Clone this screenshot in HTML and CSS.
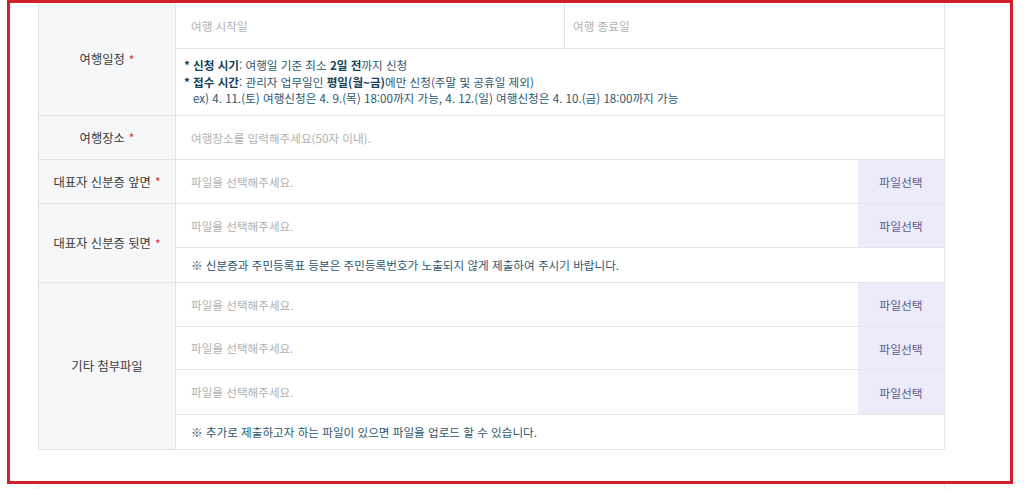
FILE: index.html
```html
<!DOCTYPE html>
<html lang="ko">
<head>
<meta charset="utf-8">
<link rel="stylesheet" href="styles.css">
</head>
<body>
<div class="frame">
  <div class="form">
    <div class="row">
      <div class="label">여행일정 <span class="req">*</span></div>
      <div class="cells">
        <div class="sub h46 split">
          <div class="half ph">여행 시작일</div>
          <div class="half ph divider">여행 종료일</div>
        </div>
        <div class="sub note-block">
          <p><span class="b">* 신청 시기</span>: 여행일 기준 최소 <span class="b">2일 전</span>까지 신청</p>
          <p><span class="b">* 접수 시간</span>: 관리자 업무일인 <span class="b">평일(월~금)</span>에만 신청(주말 및 공휴일 제외)</p>
          <p class="indent">ex) 4. 11.(토) 여행신청은 4. 9.(목) 18:00까지 가능, 4. 12.(일) 여행신청은 4. 10.(금) 18:00까지 가능</p>
        </div>
      </div>
    </div>
    <div class="row">
      <div class="label">여행장소 <span class="req">*</span></div>
      <div class="cells">
        <div class="sub h43 ph pad">여행장소를 입력해주세요(50자 이내).</div>
      </div>
    </div>
    <div class="row">
      <div class="label">대표자 신분증 앞면 <span class="req">*</span></div>
      <div class="cells">
        <div class="sub h43 file"><span class="ph pad">파일을 선택해주세요.</span><span class="btn">파일선택</span></div>
      </div>
    </div>
    <div class="row">
      <div class="label">대표자 신분증 뒷면 <span class="req">*</span></div>
      <div class="cells">
        <div class="sub h44 file"><span class="ph pad">파일을 선택해주세요.</span><span class="btn">파일선택</span></div>
        <div class="sub h34 info pad">※ 신분증과 주민등록표 등본은 주민등록번호가 노출되지 않게 제출하여 주시기 바랍니다.</div>
      </div>
    </div>
    <div class="row">
      <div class="label">기타 첨부파일</div>
      <div class="cells">
        <div class="sub h44 file"><span class="ph pad">파일을 선택해주세요.</span><span class="btn">파일선택</span></div>
        <div class="sub h43 file"><span class="ph pad">파일을 선택해주세요.</span><span class="btn">파일선택</span></div>
        <div class="sub h45 file"><span class="ph pad">파일을 선택해주세요.</span><span class="btn">파일선택</span></div>
        <div class="sub h34 info pad">※ 추가로 제출하고자 하는 파일이 있으면 파일을 업로드 할 수 있습니다.</div>
      </div>
    </div>
  </div>
</div>
<div class="below"></div>
</body>
</html>
```

FILE: styles.css
```css
* { box-sizing: border-box; }
html, body { margin: 0; padding: 0; background: #fff; }
body {
  font-family: "Noto Sans CJK KR", "Noto Sans", sans-serif;
  font-size: 12px;
  color: #333;
  width: 1024px;
  height: 489px;
  overflow: hidden;
}
.frame {
  margin-left: 7px;
  width: 1006px;
  height: 484px;
  border: 3px solid #d0212a;
  padding-left: 28px;
}
.form {
  width: 907px;
  border-left: 1px solid #e4e4e6;
  border-right: 1px solid #e4e4e6;
}
.row {
  display: grid;
  grid-template-columns: 137px 1fr;
  border-bottom: 1px solid #e4e4e6;
}
.label {
  background: #f6f7f9;
  border-right: 1px solid #e4e4e6;
  display: flex;
  align-items: center;
  justify-content: center;
  font-size: 12.3px;
  color: #3a3a3a;
  gap: 4px;
}
.req { color: #e0303a; font-size: 12px; }
.cells { display: flex; flex-direction: column; }
.sub { border-bottom: 1px solid #e4e4e6; display: flex; align-items: center; }
.sub:last-child { border-bottom: none; }
.h46 { height: 46px; }
.h45 { height: 45px; }
.h44 { height: 44px; }
.h43 { height: 43px; }
.h34 { height: 34px; }
.ph { color: #b0b0b0; font-size: 11.6px; }
.pad { padding-left: 15px; }
.split { align-items: stretch; }
.half { flex: 1; display: flex; align-items: center; padding-left: 15px; }
.half.divider { border-left: 1px solid #e4e4e6; padding-left: 8px; flex: 0 0 380px; }
.note-block {
  height: 66px;
  flex-direction: column;
  align-items: flex-start;
  justify-content: center;
  padding-left: 8px;
  color: #2c5670;
  font-size: 11.6px;
  line-height: 16.5px;
}
.note-block p { margin: 0; }
.note-block .indent { padding-left: 9px; }
.b { font-weight: 700; color: #163f58; }
.file { justify-content: space-between; align-items: stretch; }
.file .ph { display: flex; align-items: center; }
.btn {
  width: 86px;
  background: #ebebf9;
  color: #5a5a8c;
  display: flex;
  align-items: center;
  justify-content: center;
  font-size: 11.8px;
}
.info { color: #2c5670; font-size: 11.6px; }
.below {
  margin-left: 38px;
  width: 907px;
  height: 5px;
  border-left: 1px solid #ececee;
  border-right: 1px solid #ececee;
}
```
